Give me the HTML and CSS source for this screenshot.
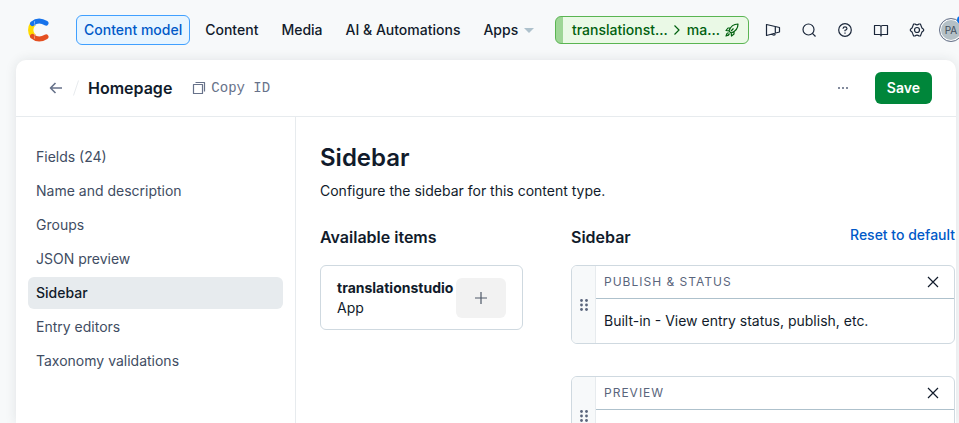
FILE: index.html
```html
<!DOCTYPE html>
<html lang="en">
<head>
<meta charset="utf-8">
<meta name="viewport" content="width=device-width, initial-scale=1">
<title>Homepage</title>
<link rel="stylesheet" href="styles.css">
</head>
<body>
<div class="app">
  <header class="navbar">
    <a class="logo" href="#" aria-label="Home">
      <svg width="22" height="24" viewBox="0 0 22 24" fill="none" stroke-width="5" stroke-linecap="round">
        <path d="M5.800 6A10 10 0 0 0 5.800 18" stroke="#ffda00" stroke-width="5.500" stroke-linecap="butt"/>
        <path d="M5.500 5.700Q11.500 .6 19 5.200" stroke="#1773eb"/>
        <path d="M5.500 18.300Q11.500 23.400 19 18.800" stroke="#e44f20"/>
        <path d="M7.500 3.500Q6.800 5.500 8.300 7.300" stroke="#7db6f8" stroke-width="1"/>
        <path d="M7.500 20.500Q6.800 18.500 8.300 16.700" stroke="#f29a7c" stroke-width="1"/>
      </svg>
    </a>
    <nav class="main-nav" aria-label="Main">
      <a class="nav-item nav-item-active" href="#">Content model</a>
      <a class="nav-item" href="#">Content</a>
      <a class="nav-item" href="#">Media</a>
      <a class="nav-item" href="#">AI &amp; Automations</a>
      <a class="nav-item" href="#">Apps <span class="caret"></span></a>
    </nav>
    <button class="environment" type="button">
      <span class="space-name">translationst…</span>
      <svg class="icon" width="8" height="12" viewBox="0 0 8 12"><path d="M1.500 1.500L6 6l-4.500 4.500"/></svg>
      <span class="env-name">ma…</span>
      <svg class="icon" width="14" height="14" viewBox="0 0 14 14"><path d="M5 9L4 7.800Q6.500 1 13 1Q13 7.500 6.200 10zM5.200 5H3L1 7.500l3 .3M9 8.800V11l-2.500 2-.3-3M3.500 9.500Q1.500 10 1 13q3-.5 3.500-2.500M6 8l2.500-2.500"/></svg>
    </button>
    <div class="tools">
      <button class="tool" type="button" aria-label="News"><svg class="icon" width="16" height="16" viewBox="0 0 16 16"><path d="M1.500 2.500v11l13-3.500V5.500zM10.300 4.700v6.400M7.200 12q.2 1.200 1.700 1.200 1.400 0 1.400-2"/></svg></button>
      <button class="tool" type="button" aria-label="Search"><svg class="icon" width="16" height="16" viewBox="0 0 16 16"><circle cx="7.500" cy="7.500" r="5.500"/><path d="M11.400 11.400L14.500 14.500"/></svg></button>
      <button class="tool" type="button" aria-label="Help"><svg class="icon" width="16" height="16" viewBox="0 0 16 16"><circle cx="8" cy="8" r="6.300"/><path d="M6 6.700Q6.200 4.800 8 4.800t2 1.700Q10 8 8 8.300v1M8 10.600v1.200"/></svg></button>
      <button class="tool" type="button" aria-label="Documentation"><svg class="icon" width="16" height="16" viewBox="0 0 16 16"><path d="M1.500 3.500h5Q8 3.500 8 5v9q0-1.500-1.500-1.500h-5zM14.500 3.500h-5Q8 3.500 8 5v9q0-1.500 1.500-1.500h5z"/></svg></button>
      <button class="tool" type="button" aria-label="Settings"><svg class="icon" width="16" height="16" viewBox="0 0 16 16"><path d="M4.600 2H6Q8 3.600 10 2h1.400l1 2.600q.2 1.600 2.200 2.600v1.600q-2 1-2.200 2.600l-1 2.600H10Q8 12.400 6 14H4.600l-1-2.600Q3.400 9.800 1.400 8.800V7.200q2-1 2.200-2.600z"/><circle cx="8" cy="8" r="2.500"/></svg></button>
    </div>
    <button class="account" type="button" aria-label="Account"><span class="avatar">PA</span><span class="status-dot"></span></button>
  </header>

  <main class="sheet">
    <header class="page-header">
      <button class="back" type="button" aria-label="Back"><svg class="icon back-icon" width="14" height="12" viewBox="0 0 14 12"><path d="M13 6H1.500M6.500 1L1.500 6l5 5"/></svg></button>
      <svg class="slash" width="6" height="16" viewBox="0 0 6 16"><path d="M5.500 .5L.5 15.500"/></svg>
      <h1 class="page-title">Homepage</h1>
      <button class="copy-id" type="button"><svg class="icon" width="14" height="14" viewBox="0 0 14 14"><path d="M1.500 3.500h9v9h-9zM3.500 1.500h9v9"/></svg>Copy ID</button>
      <button class="more" type="button" aria-label="More actions"><svg width="12" height="4" viewBox="0 0 12 4"><circle cx="2" cy="2" r="1"/><circle cx="6" cy="2" r="1"/><circle cx="10" cy="2" r="1"/></svg></button>
      <button class="save" type="button">Save</button>
    </header>
    <div class="page-body">
      <nav class="side-nav" aria-label="Content type">
        <a class="side-link" href="#">Fields (24)</a>
        <a class="side-link" href="#">Name and description</a>
        <a class="side-link" href="#">Groups</a>
        <a class="side-link" href="#">JSON preview</a>
        <a class="side-link side-link-active" href="#">Sidebar</a>
        <a class="side-link" href="#">Entry editors</a>
        <a class="side-link" href="#">Taxonomy validations</a>
      </nav>
      <section class="content">
        <h2 class="content-title">Sidebar</h2>
        <p class="intro">Configure the sidebar for this content type.</p>
        <div class="columns">
          <section class="available">
            <h3 class="column-title">Available items</h3>
            <div class="item">
              <div class="item-text"><strong class="item-name">translationstudio</strong><span>App</span></div>
              <button class="add" type="button" aria-label="Add translationstudio"><svg class="icon" width="14" height="14" viewBox="0 0 14 14"><path d="M7 1v12M1 7h12"/></svg></button>
            </div>
          </section>
          <section class="widgets">
            <div class="widgets-header">
              <h3 class="column-title">Sidebar</h3>
              <button class="reset" type="button">Reset to default</button>
            </div>
            <article class="widget">
              <div class="handle"><svg width="8" height="12" viewBox="0 0 8 12"><g><circle cx="1.500" cy="1.500" r="1.400"/><circle cx="6.500" cy="1.500" r="1.400"/><circle cx="1.500" cy="6" r="1.400"/><circle cx="6.500" cy="6" r="1.400"/><circle cx="1.500" cy="10.500" r="1.400"/><circle cx="6.500" cy="10.500" r="1.400"/></g></svg></div>
              <div class="widget-main">
                <div class="widget-head"><h4 class="widget-title">Publish &amp; status</h4><button class="close" type="button" aria-label="Remove Publish &amp; status"><svg class="icon" width="12" height="12" viewBox="0 0 12 12"><path d="M1 1l10 10M11 1L1 11"/></svg></button></div>
                <p class="widget-text">Built-in - View entry status, publish, etc.</p>
              </div>
            </article>
            <article class="widget">
              <div class="handle"><svg width="8" height="12" viewBox="0 0 8 12"><g><circle cx="1.500" cy="1.500" r="1.400"/><circle cx="6.500" cy="1.500" r="1.400"/><circle cx="1.500" cy="6" r="1.400"/><circle cx="6.500" cy="6" r="1.400"/><circle cx="1.500" cy="10.500" r="1.400"/><circle cx="6.500" cy="10.500" r="1.400"/></g></svg></div>
              <div class="widget-main">
                <div class="widget-head"><h4 class="widget-title">Preview</h4><button class="close" type="button" aria-label="Remove Preview"><svg class="icon" width="12" height="12" viewBox="0 0 12 12"><path d="M1 1l10 10M11 1L1 11"/></svg></button></div>
                <p class="widget-text"></p>
              </div>
            </article>
          </section>
        </div>
      </section>
    </div>
  </main>
</div>
</body>
</html>
```
FILE: styles.css
```css
* { box-sizing: border-box; }
body {
  margin: 0;
  background: #f7f9fa;
  color: #111b2b;
  font: 14px/20px Inter, "Liberation Sans", sans-serif;
}
h1, h2, h3, h4, p { margin: 0; }
a { color: inherit; text-decoration: none; }
button {
  margin: 0;
  padding: 0;
  border: 0;
  background: none;
  color: inherit;
  font: inherit;
  cursor: pointer;
}
svg { display: block; flex: none; }
.icon { fill: none; stroke: currentColor; stroke-width: 1.2; stroke-linejoin: round; }

.app { display: flex; flex-direction: column; height: 100vh; overflow: hidden; }

.navbar { display: flex; align-items: center; flex: none; height: 60px; padding-left: 27px; }
.logo { margin-right: 27px; }
.main-nav { display: flex; gap: 7px; }
.nav-item {
  display: flex;
  align-items: center;
  gap: 6px;
  height: 30px;
  padding: 0 7px;
  border: 1px solid transparent;
  border-radius: 6px;
  font-weight: 500;
  white-space: nowrap;
}
.nav-item-active { border-color: #40a0ff; background: #e8f5ff; color: #0059c8; }
.caret { border: 5px solid transparent; border-top-color: #aec1cc; border-bottom: 0; }
.environment {
  display: flex;
  align-items: center;
  flex: none;
  width: 194px;
  height: 28px;
  margin-left: auto;
  padding: 0 9px 0 16px;
  border: 1px solid #5ab552;
  border-radius: 6px;
  background: linear-gradient(to right, #9ed696 7px, #eaf9e6 7px);
  color: #00600f;
  font-weight: 500;
}
.env-name { margin: 0 5px 0 auto; }
.space-name { margin-right: auto; }
.tools { display: flex; gap: 20px; margin: 0 14px 0 16px; }
.tool { color: #1b273a; }
.account { position: relative; flex: none; margin-right: -4px; }
.avatar {
  display: block;
  width: 24px;
  height: 24px;
  border: 1px solid #67728a;
  border-radius: 50%;
  background: #b4c0c6;
  box-shadow: inset 0 0 0 1px #fff;
  color: #414d5c;
  font-size: 10px;
  line-height: 22px;
}
.status-dot { position: absolute; top: -2px; right: -2px; width: 8px; height: 8px; border-radius: 50%; background: #0070f0; }

.sheet {
  display: flex;
  flex-direction: column;
  flex: 1;
  min-height: 0;
  margin: 0 3px 0 16px;
  border-radius: 10px 10px 0 0;
  background: #fff;
  box-shadow: 0 0 12px rgba(25, 37, 50, .1);
}
.page-header {
  display: flex;
  align-items: center;
  flex: none;
  height: 57px;
  padding: 0 24px 0 33px;
  border-bottom: 1px solid #e7ebee;
}
.back { color: #67728a; }
.back-icon { stroke-width: 1.6; }
.slash { margin: 0 9px 0 10px; fill: none; stroke: #e7ebee; }
.page-title { font-size: 16px; line-height: 24px; font-weight: 600; }
.copy-id {
  display: flex;
  align-items: center;
  gap: 5px;
  margin-left: 20px;
  color: #67728a;
  font-family: "Liberation Mono", monospace;
}
.more { margin: 0 26px 0 auto; fill: #5a657c; }
.save {
  height: 32px;
  padding: 0 12px;
  border-radius: 6px;
  background: #00863a;
  color: #fff;
  font-weight: 600;
}
.page-body { display: flex; flex: 1; min-height: 0; }
.side-nav {
  display: flex;
  flex-direction: column;
  flex: none;
  gap: 2px;
  width: 280px;
  padding: 24px 12px;
  border-right: 1px solid #e7ebee;
}
.side-link { padding: 6px 8px; border-radius: 6px; color: #414d63; }
.side-link-active { background: #e7ebee; color: #111b2b; font-weight: 500; }

.content { flex: 1; min-width: 0; padding: 25px 1px 0 24px; overflow: hidden; }
.content-title { font-size: 24px; line-height: 32px; font-weight: 600; }
.intro { margin-top: 7px; }
.columns { display: flex; gap: 48px; margin-top: 24px; }
.available { flex: none; width: 203px; }
.column-title { font-size: 16px; line-height: 24px; font-weight: 600; }
.item {
  display: flex;
  align-items: center;
  height: 65px;
  margin-top: 16px;
  padding: 0 16px;
  border: 1px solid #cfd9e0;
  border-radius: 6px;
}
.item-text { flex: 1; min-width: 0; }
.item-name { display: block; font-weight: 700; }
.add {
  display: grid;
  place-items: center;
  flex: none;
  width: 50px;
  height: 40px;
  border-radius: 6px;
  background: #f2f2f2;
  color: #4e5868;
}
.widgets { flex: 1; min-width: 0; }
.widgets-header { display: flex; justify-content: space-between; align-items: flex-start; margin-bottom: 16px; }
.reset { color: #0059c8; font-weight: 500; }
.widget {
  display: flex;
  margin-bottom: 32px;
  border: 1px solid #cfd9e0;
  border-radius: 6px;
  overflow: hidden;
}
.handle {
  display: grid;
  place-items: center;
  flex: none;
  width: 24px;
  border-right: 1px solid #e7ebee;
  background: #f7f9fa;
  fill: #5a657c;
}
.widget-main { flex: 1; }
.widget-head {
  display: flex;
  align-items: center;
  justify-content: space-between;
  height: 33px;
  padding: 0 15px 0 8px;
  border-bottom: 1px solid #aec1cc;
}
.widget-title { color: #5a657c; font-size: 12px; font-weight: 400; letter-spacing: 1px; text-transform: uppercase; }
.widget-text { min-height: 44px; padding: 12px 8px; }
```
